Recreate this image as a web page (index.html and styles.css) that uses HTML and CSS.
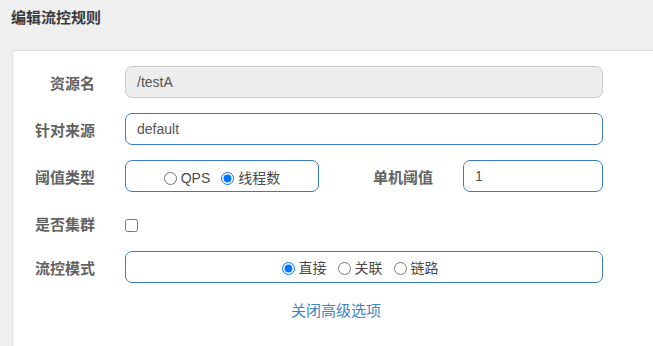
FILE: index.html
```html
<!DOCTYPE html>
<html lang="zh-CN">
<head>
<meta charset="utf-8">
<title>编辑流控规则</title>
<link rel="stylesheet" href="styles.css">
</head>
<body>
<div class="header"><span class="title">编辑流控规则</span></div>
<div class="card">
  <div class="row">
    <label class="label">资源名</label>
    <input class="field field-wide" type="text" value="/testA" disabled>
  </div>
  <div class="row">
    <label class="label">针对来源</label>
    <input class="field field-wide" type="text" value="default">
  </div>
  <div class="row">
    <label class="label">阈值类型</label>
    <div class="radio-box radio-box-small">
      <label class="opt"><input type="radio" name="grade">QPS</label>
      <label class="opt"><input type="radio" name="grade" checked>线程数</label>
    </div>
    <label class="label label2">单机阈值</label>
    <input class="field field-small" type="text" value="1">
  </div>
  <div class="row row-check">
    <label class="label">是否集群</label>
    <input class="check" type="checkbox">
  </div>
  <div class="row">
    <label class="label">流控模式</label>
    <div class="radio-box radio-box-wide">
      <label class="opt"><input type="radio" name="strategy" checked>直接</label>
      <label class="opt"><input type="radio" name="strategy">关联</label>
      <label class="opt"><input type="radio" name="strategy">链路</label>
    </div>
  </div>
  <div class="link-row"><a class="link" href="#">关闭高级选项</a></div>
</div>
</body>
</html>
```
FILE: styles.css
```css
html, body {
  margin: 0;
  padding: 0;
}
body {
  background: #efefef;
  font-family: "Liberation Sans", "Noto Sans CJK SC", sans-serif;
  color: #555;
  height: 346px;
  overflow: hidden;
}
.header {
  height: 50px;
  box-sizing: border-box;
  padding: 8px 0 0 11px;
}
.title {
  font-size: 15px;
  line-height: 20px;
  font-weight: bold;
  color: #3a3a3a;
}
.card {
  margin-left: 12px;
  background: #fff;
  border-top: 1px solid #dcdcdc;
  border-left: 1px solid #dcdcdc;
  border-radius: 4px 0 0 0;
  height: 296px;
  box-sizing: border-box;
  padding-top: 15px;
}
.row {
  display: flex;
  align-items: flex-start;
  height: 32px;
  margin-bottom: 15px;
}
.label {
  width: 82px;
  margin-right: 30px;
  text-align: right;
  font-size: 15px;
  font-weight: bold;
  color: #626262;
  line-height: 20px;
  padding-top: 8px;
  box-sizing: border-box;
  flex: none;
}
.label2 {
  width: 114px;
  margin-right: 30px;
}
.field {
  height: 32px;
  box-sizing: border-box;
  border: 1px solid #3a7cc0;
  border-radius: 7px;
  padding: 0 11px;
  font-family: "Liberation Sans", "Noto Sans CJK SC", sans-serif;
  font-size: 14px;
  color: #555;
  background: #fff;
  outline: none;
  margin: 0;
}
.field:disabled {
  background: #eee;
  border-color: #ccc;
  color: #555;
}
.field-wide {
  width: 478px;
}
.field-small {
  width: 140px;
}
.radio-box {
  height: 32px;
  box-sizing: border-box;
  border: 1px solid #3a7cc0;
  border-radius: 7px;
  display: flex;
  align-items: center;
  justify-content: center;
  padding-top: 4px;
  gap: 11px;
  font-size: 14px;
  color: #4a4a4a;
}
.radio-box-small {
  width: 194px;
}
.radio-box-wide {
  width: 478px;
  padding-top: 2px;
  padding-right: 8px;
}
.opt {
  display: flex;
  align-items: center;
  line-height: 20px;
}
.opt input {
  margin: 0 4px 0 0;
  width: 13px;
  height: 13px;
}
.row-check {
  margin-top: 2px;
  margin-bottom: 12px;
}
.check {
  margin: 12px 0 0 0;
  width: 13px;
  height: 13px;
}
.link-row {
  text-align: center;
  margin-top: 18px;
  padding-left: 6px;
  line-height: 20px;
}
.link {
  font-size: 15px;
  color: #3a85c8;
  text-decoration: none;
}
```
